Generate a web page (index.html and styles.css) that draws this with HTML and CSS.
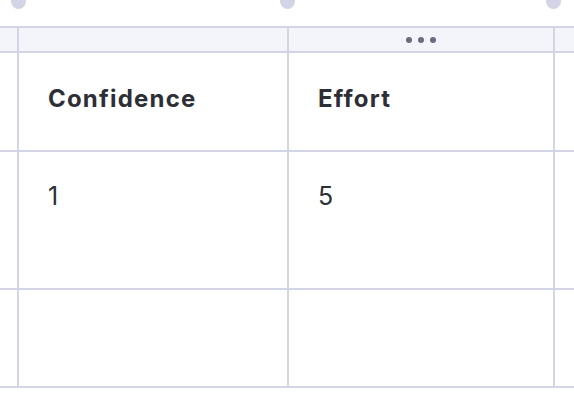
FILE: index.html
```html
<!DOCTYPE html>
<html>
<head>
<meta charset="utf-8">
<link rel="stylesheet" href="styles.css">
</head>
<body>
<div class="board">
  <div class="handles">
    <span class="handle h1"></span>
    <span class="handle h2"></span>
    <span class="handle h3"></span>
  </div>
  <div class="table">
    <div class="bar"></div>
    <div class="bar"></div>
    <div class="bar bar-menu"><span class="dot"></span><span class="dot"></span><span class="dot"></span></div>
    <div class="bar"></div>

    <div class="cell edge"></div>
    <div class="cell head">Confidence</div>
    <div class="cell head col3">Effort</div>
    <div class="cell edge"></div>

    <div class="cell edge"></div>
    <div class="cell body">1</div>
    <div class="cell body col3">5</div>
    <div class="cell edge"></div>

    <div class="cell edge"></div>
    <div class="cell"></div>
    <div class="cell"></div>
    <div class="cell edge"></div>
  </div>
</div>
</body>
</html>
```
FILE: styles.css
```css
html, body {
  margin: 0;
  padding: 0;
  background: #ffffff;
}
.board {
  width: 574px;
  height: 408px;
  overflow: hidden;
  font-family: Inter, "Noto Sans", sans-serif;
  color: #2e2f36;
}
.handles {
  position: relative;
  height: 26px;
}
.handle {
  position: absolute;
  top: -6px;
  width: 15px;
  height: 15px;
  border-radius: 50%;
  background: #d3d5e7;
}
.h1 { left: 11px; }
.h2 { left: 280px; }
.h3 { left: 546px; }
.table {
  display: grid;
  grid-template-columns: 17px 268px 264px 1fr;
  grid-template-rows: 23px 97px 136px 96px;
  gap: 2px;
  padding: 2px 0;
  background: #d3d5e6;
}
.bar {
  background: #f4f5fa;
}
.bar-menu {
  display: flex;
  align-items: center;
  justify-content: center;
  gap: 6px;
  padding-top: 1px;
}
.dot {
  width: 6px;
  height: 6px;
  border-radius: 50%;
  background: #6a6b7d;
}
.cell {
  background: #ffffff;
  padding: 0 29px;
  overflow: hidden;
  white-space: nowrap;
  min-width: 0;
}
.cell.edge {
  padding: 0;
}
.head {
  font-weight: 700;
  font-size: 24px;
  line-height: 28px;
  padding-top: 32px;
  letter-spacing: 1.2px;
}
.body {
  font-size: 25px;
  line-height: 30px;
  padding-top: 29px;
}
```
